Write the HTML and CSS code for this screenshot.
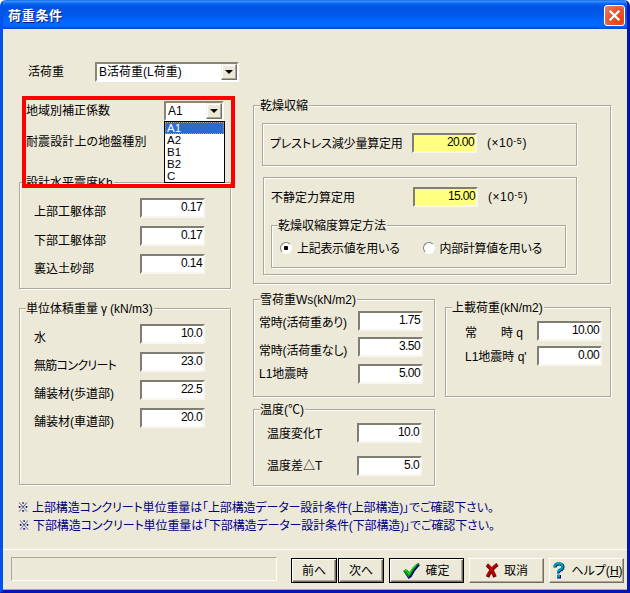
FILE: index.html
```html
<!DOCTYPE html>
<html lang="ja">
<head>
<meta charset="utf-8">
<title>荷重条件</title>
<link rel="stylesheet" href="styles.css">
</head>
<body>
<div class="window">
  <header class="titlebar">
    <h1>荷重条件</h1>
    <button class="close" aria-label="閉じる"><svg width="21" height="21" viewBox="0 0 21 21"><path d="M5.7 5.7l9.6 9.6M15.3 5.7l-9.6 9.6" stroke="#fff" stroke-width="2.3"/></svg></button>
  </header>

  <main class="client">
    <div class="live-load">
      <span class="live-label">活荷重</span>
      <div class="combo combo-wide"><span class="w-live">B活荷重(L荷重)</span><i class="drop"></i></div>
    </div>

    <div class="columns">
      <div class="left">
        <section class="region">
          <div class="region-row"><span>地域別補正係数</span>
            <div class="combo combo-small"><span>A1</span><i class="drop"></i>
              <ul class="list"><li class="selected">A1</li><li>A2</li><li>B1</li><li>B2</li><li>C</li></ul>
            </div>
          </div>
          <div class="ground">耐震設計上の地盤種別</div>
        </section>

        <section class="group seismic">
          <h2 class="legend">設計水平震度Kh</h2>
          <div class="row"><span>上部工躯体部</span><b class="field">0.17</b></div>
          <div class="row low"><span>下部工躯体部</span><b class="field">0.17</b></div>
          <div class="row low"><span>裏込土砂部</span><b class="field">0.14</b></div>
        </section>

        <section class="group weight">
          <h2 class="legend w-weight">単位体積重量<span class="gamma">γ</span>(kN/m3)</h2>
          <div class="row"><span>水</span><b class="field">10.0</b></div>
          <div class="row"><span class="w-conc">無筋コンクリート</span><b class="field">23.0</b></div>
          <div class="row"><span>舗装材(歩道部)</span><b class="field">22.5</b></div>
          <div class="row"><span>舗装材(車道部)</span><b class="field">20.0</b></div>
        </section>
      </div>

      <div class="right">
        <section class="group drying">
          <h2 class="legend">乾燥収縮</h2>
          <div class="group prestress">
            <span class="w-pre">プレストレス減少量算定用</span><b class="field yellow">20.00</b><span class="unit">(×10<sup>-5</sup>)</span>
          </div>
          <div class="group static">
            <div class="static-row"><span>不静定力算定用</span><b class="field yellow">15.00</b><span class="unit">(×10<sup>-5</sup>)</span></div>
            <div class="group method">
              <h2 class="legend">乾燥収縮度算定方法</h2>
              <label class="option"><i class="radio on"></i><span>上記表示値を用いる</span></label>
              <label class="option"><i class="radio"></i><span>内部計算値を用いる</span></label>
            </div>
          </div>
        </section>

        <div class="lower">
          <div class="lower-left">
            <section class="group snow">
              <h2 class="legend w-snow">雪荷重Ws(kN/m2)</h2>
              <div class="row"><span class="w-ari">常時(活荷重あり)</span><b class="field">1.75</b></div>
              <div class="row r2"><span class="w-ari">常時(活荷重なし)</span><b class="field">3.50</b></div>
              <div class="row"><span>L1地震時</span><b class="field">5.00</b></div>
            </section>
            <section class="group temp">
              <h2 class="legend">温度(℃)</h2>
              <div class="row"><span>温度変化T</span><b class="field">10.0</b></div>
              <div class="row"><span>温度差△T</span><b class="field">5.0</b></div>
            </section>
          </div>
          <section class="group surcharge">
            <h2 class="legend w-sur">上載荷重(kN/m2)</h2>
            <div class="row"><span>常　　時 q</span><b class="field">10.00</b></div>
            <div class="row"><span>L1地震時 q'</span><b class="field">0.00</b></div>
          </section>
        </div>
      </div>
    </div>

    <div class="notes">
      <p>※ 上部構造コンクリート単位重量は「上部構造データー設計条件(上部構造)」でご確認下さい。</p>
      <p>※ 下部構造コンクリート単位重量は「下部構造データー設計条件(下部構造)」でご確認下さい。</p>
    </div>
  </main>

  <footer class="footer">
    <div class="status"></div>
    <button class="btn dark nav first">前へ</button>
    <button class="btn dark nav">次へ</button>
    <button class="btn dark ok">
      <svg width="18" height="16" viewBox="0 0 18 16"><path d="M1 9l3-2 3 3q3-6 8-9l2 1q-5 5-8.500 12l-3 2z" fill="#000080"/><path d="M0 8l3-2 3.500 3.500q3-6 8.500-9.500h1.500q-6 6-9 12.500l-2 2z" fill="#009000"/><path d="M1.500 8l1.500-1 3 4q3-6 7-9" fill="none" stroke="#20d820" stroke-width="1.200"/></svg>
      <span>確定</span></button>
    <button class="btn cancel">
      <svg width="14" height="15" viewBox="0 0 14 15"><path d="M2 2q5 4 8 12M12.500 1.500q-6 4-10 12.500" fill="none" stroke="#700000" stroke-width="3.600"/><path d="M2 1.500q5 4 8 11M11.500 1.500q-6 4-9.500 11.500" fill="none" stroke="#c80000" stroke-width="2"/></svg>
      <span>取消</span></button>
    <button class="btn help">
      <svg width="12" height="17" viewBox="0 0 12 17"><path d="M2 5.500q0-3.500 4-3.500t4 3q0 2-2.500 3.200t-1.500 3" fill="none" stroke="#000080" stroke-width="3"/><path d="M1.500 5q0-3.500 4-3.500t4 3q0 2-2.500 3.200t-1.500 2.800" fill="none" stroke="#00a0a8" stroke-width="2.400"/><path d="M4 13h4v3.500h-4z" fill="#000080"/><path d="M4 12.500h3v3h-3z" fill="#00a0a8"/></svg>
      <span>ヘルプ(<u>H</u>)</span></button>
  </footer>
</div>
</body>
</html>
```
FILE: styles.css
```css
*, *::before, *::after { box-sizing: border-box; }
body { margin: 0; background: #fff; font: 12px/20px "Liberation Sans", "Noto Sans CJK JP", sans-serif; font-feature-settings: "palt"; color: #000; white-space: nowrap; }
h1, h2, p, ul { margin: 0; padding: 0; font-weight: 400; }
button { padding: 0; font: inherit; color: inherit; }

.window { width: 630px; height: 593px; display: flex; flex-direction: column; background: #ece9d8; border: solid #0831d9; border-width: 0 3px 3px; border-left-color: #0055e8; border-right-color: #0018b0; border-bottom-color: #0018b0; border-radius: 6px 6px 0 0; overflow: hidden; }
.titlebar { height: 29px; flex: none; margin: 0 -3px; padding: 0 5px 0 8px; display: flex; justify-content: space-between; background: linear-gradient(#0958d8 0, #3d95ff 1px, #2b85fa 2px, #0560ee 4px, #0054e4 7px, #0058ea 14px, #0368ff 22px, #0264fb 26px, #0046cc 29px); }
.titlebar h1 { color: #fff; font-size: 13px; font-weight: 700; line-height: 32px; letter-spacing: .7px; text-shadow: 1px 1px #0a1883; }
.close { width: 21px; height: 21px; margin-top: 5px; border: 1px solid #fff; border-radius: 3px; background: radial-gradient(circle at 75% 75%, #e84008, #e35a38 55%, #e98470); }
.close svg { display: block; margin: -1px; }

.client { height: 520px; flex: none; padding: 33px 0 0 16px; }
.live-load { display: flex; height: 34px; }
.live-label { width: 76px; padding-left: 9px; line-height: 20px; }
.combo { position: relative; height: 20px; border: 2px solid; border-color: #888678 #fff #fff #888678; background: #fff; display: flex; justify-content: space-between; line-height: 17px; padding-left: 2px; }
.combo-wide { width: 144px; }
.combo-small { width: 60px; }
.drop { width: 16px; height: 16px; background: #ece9d8; border: 1px solid; border-color: #f4f2e8 #716f64 #716f64 #f4f2e8; box-shadow: inset -1px -1px #aca899, inset 1px 1px #fff; display: flex; }
.drop::after { content: ""; margin: 5px 0 0 3px; width: 0; height: 0; border: 4px solid transparent; border-top-color: #000; border-bottom: 0; }
.list { position: absolute; z-index: 4; left: -2px; top: 18px; width: 61px; border: 1px solid #000; background: #fff; list-style: none; font-family: "Liberation Sans", sans-serif; }
.list li { height: 12px; line-height: 12px; padding-left: 2px; font-size: 11.5px; }
.list .selected { background: #316ac5; color: #fff; outline: 1px dotted #e09a45; outline-offset: -1px; }

.columns { display: flex; gap: 22px; height: 401px; }
.left { width: 212px; }
.right { width: 358px; padding-top: 9px; }
.region { position: relative; height: 86px; padding: 5px 0 0 7px; }
.region::after { content: ""; position: absolute; z-index: 3; left: 3px; top: 0; width: 213px; height: 92px; border: 4px solid #f00; }
.region-row { display: flex; line-height: 21px; }
.region-row > span { width: 138px; }
.region-row .combo { line-height: 17px; }
.ground { margin-top: 10px; letter-spacing: .1px; }

.group { position: relative; border: 1px solid #aca899; box-shadow: inset 1px 1px #fff, 1px 1px #fff; }
.legend { position: absolute; top: -10px; left: 6px; padding: 0 1px 0 0; font-size: 12px; line-height: 20px; background: #ece9d8; }
.row { display: flex; height: 28px; }
.row > span { padding-top: 4px; }
.field { width: 65px; height: 20px; flex: none; border: 2px solid; border-color: #807e72 #f8f6ee #f8f6ee #807e72; background: #fff; font-weight: 400; text-align: right; line-height: 15px; padding-right: 1px; letter-spacing: -.6px; }
.yellow { background: #ffff80; }
.seismic { height: 107px; padding: 15px 0 0 14px; }
.seismic .row > span, .weight .row > span { width: 106px; }
.seismic .low > span { padding-top: 5px; }
.weight { height: 177px; margin-top: 19px; padding: 15px 0 0 14px; }
.gamma { padding: 0 3px; }
.weight .w-conc { letter-spacing: -.7px; }

.drying { height: 179px; padding: 17px 0 0 8px; }
.prestress { width: 315px; height: 43px; padding: 9px 0 0 7px; display: flex; }
.prestress > span:first-child { width: 142px; line-height: 23px; letter-spacing: -.2px; }
.unit { padding-left: 10px; line-height: 21px; letter-spacing: .5px; }
.unit sup { font-size: 9px; line-height: 0; vertical-align: 3px; }
.static { width: 314px; height: 98px; margin: 11px 0 0 1px; padding: 9px 0 0 7px; }
.static-row { display: flex; height: 38px; }
.static-row > span:first-child { width: 142px; line-height: 23px; }
.method { width: 295px; height: 43px; padding: 13px 0 0 8px; display: flex; }
.option { display: flex; width: 143px; line-height: 20px; letter-spacing: -.3px; }
.option span { padding-left: 5px; }
.radio { width: 12px; height: 12px; margin-top: 3px; border-radius: 50%; background: #fff; border: 1px solid; border-color: #807e72 #fff #fff #807e72; }
.radio.on { background: radial-gradient(circle, #000 2px, #fff 2.5px); }

.lower { display: flex; gap: 10px; padding-top: 15px; align-items: flex-start; }
.lower-left { width: 182px; }
.snow { height: 98px; padding: 11px 0 0 5px; }
.snow .row { height: 26px; }
.snow .row > span { width: 99px; padding-top: 2px; }
.snow .w-ari { letter-spacing: -.2px; }
.snow .r2 { height: 27px; }
.snow .r2 > span { padding-top: 4px; }
.snow .row:last-child > span { padding-top: 0; }
.temp { height: 77px; margin-top: 12px; padding: 13px 0 0 13px; }
.temp .row { height: 33px; }
.temp .row > span { width: 90px; padding-top: 1px; }
.temp .row:last-child > span { padding-top: 0; }
.surcharge { width: 166px; height: 90px; margin-top: 8px; padding: 13px 0 0 19px; }
.surcharge .row { height: 25px; }
.surcharge .row > span { width: 72px; padding-top: 2px; }
.surcharge .row:last-child > span { padding-top: 1px; }

.notes { color: #000080; line-height: 18px; padding-top: 2px; letter-spacing: -.12px; margin-left: -2px; }
.notes p:last-child { padding-left: 1px; }

.footer { height: 41px; flex: none; border-top: 1px solid #fff; border-bottom: 1px solid #aca899; padding: 7px 0 0 8px; display: flex; align-items: flex-start; }
.status { width: 266px; height: 24px; border: 1px solid; border-color: #aca899 #fff #fff #aca899; }
.btn { width: 75px; height: 25px; margin: 1px 0 0 5px; display: flex; align-items: center; justify-content: center; background: #ece9d8; border: 1px solid; border-color: #fff #716f64 #716f64 #fff; box-shadow: inset -1px -1px #aca899; line-height: 20px; }
.btn.dark { border-color: #000; box-shadow: inset 1px 1px #fff, inset -1px -1px #716f64, inset -2px -2px #aca899; }
.btn.nav { width: 46px; margin-left: 1px; }
.btn.first { margin-left: 14px; }
.ok svg { margin-right: 4px; }
.cancel svg { margin-right: 5px; }
.btn.help { padding-left: 3px; }
.help svg { margin-right: 6px; }
```
